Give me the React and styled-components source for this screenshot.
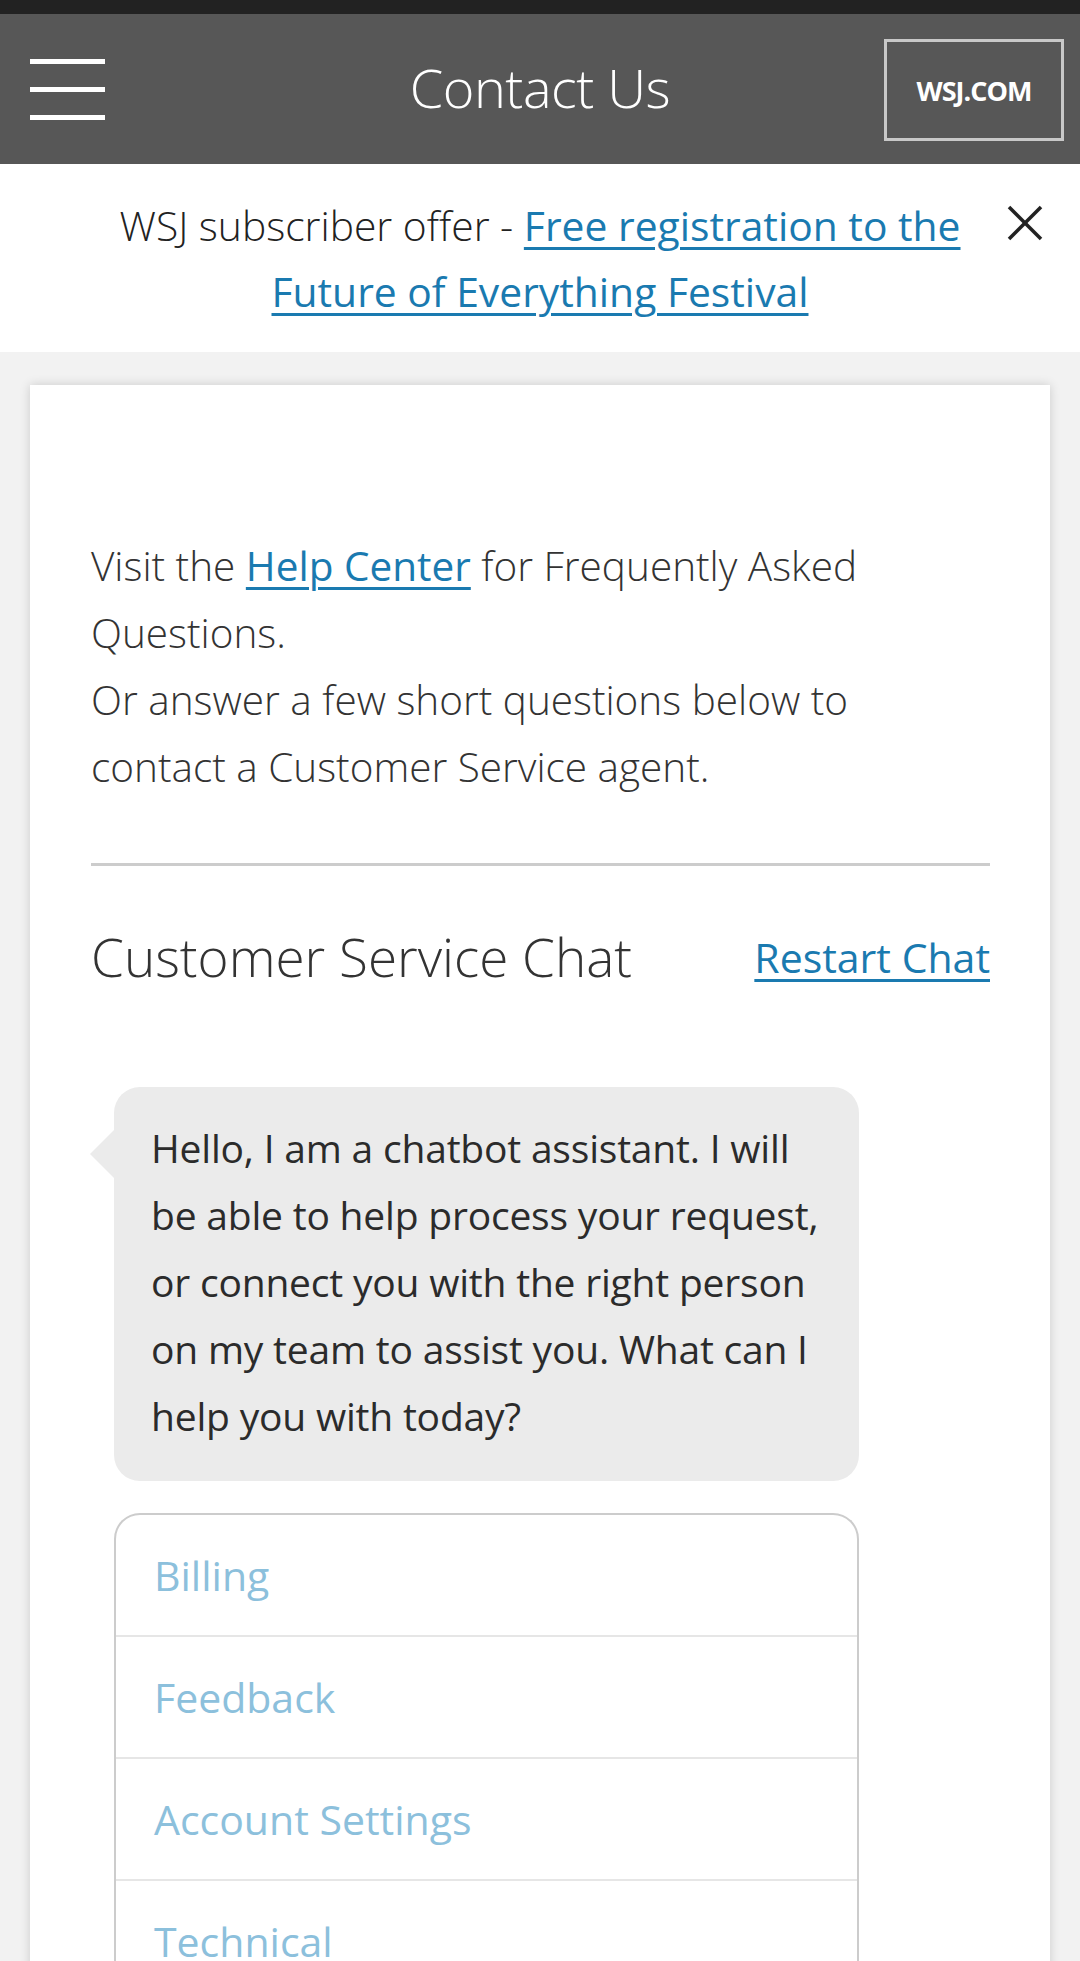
import styled, { createGlobalStyle } from "styled-components";

const GlobalStyle = createGlobalStyle`
    body {
        margin: 0;
        background: #f2f2f2;
        font-family: "Open Sans", "Noto Sans", sans-serif;
        color: #333333;
    }
`;

const options = ["Billing", "Feedback", "Account Settings", "Technical"];

export default function App(){
    return(
        <>
        <GlobalStyle />
        <StatusStrip />
        <Header>
            <Burger>
                <span></span>
                <span></span>
                <span></span>
            </Burger>
            <Title>Contact Us</Title>
            <SiteButton>WSJ.COM</SiteButton>
        </Header>

        <Banner>
            <BannerText>
                WSJ subscriber offer - <Link href="#">Free registration to the Future of Everything Festival</Link>
            </BannerText>
            <Close aria-label="close">
                <svg width="38" height="38" viewBox="0 0 38 38">
                    <line x1="3" y1="3" x2="35" y2="35" stroke="#222" strokeWidth="3.5" />
                    <line x1="35" y1="3" x2="3" y2="35" stroke="#222" strokeWidth="3.5" />
                </svg>
            </Close>
        </Banner>

        <Main>
            <Card>
                <Intro>
                    Visit the <Link href="#">Help Center</Link> for Frequently Asked Questions.
                    <br />
                    Or answer a few short questions below to contact a Customer Service agent.
                </Intro>
                <Divider />
                <ChatHead>
                    <h2>Customer Service Chat</h2>
                    <Link href="#" className="restart">Restart Chat</Link>
                </ChatHead>
                <Bubble>
                    Hello, I am a chatbot assistant. I will be able to help process your request, or connect you with the right person on my team to assist you. What can I help you with today?
                </Bubble>
                <Choices>
                    {options.map((o) => (
                        <li key={o}>{o}</li>
                    ))}
                </Choices>
            </Card>
        </Main>
        </>
    );
}

const StatusStrip = styled.div`
    height: 14px;
    background: #222222;
`

const Header = styled.header`
    height: 150px;
    background: #575757;
    display: grid;
    grid-template-columns: 1fr auto 1fr;
    align-items: center;
    padding: 0 16px;
`

const Burger = styled.div`
    display: flex;
    flex-direction: column;
    gap: 23px;
    width: 75px;
    margin-left: 14px;
    span {
        display: block;
        height: 5px;
        background: #ffffff;
    }
`

const Title = styled.h1`
    margin: 0 0 4px;
    font-weight: 300;
    font-size: 54px;
    color: #ffffff;
    letter-spacing: -0.5px;
`

const SiteButton = styled.button`
    justify-self: end;
    width: 180px;
    height: 102px;
    background: transparent;
    border: 3px solid #c8c8c8;
    color: #ffffff;
    font-family: "Open Sans", sans-serif;
    font-weight: 700;
    font-size: 27px;
    letter-spacing: -1px;
    margin-top: 2px;
`

const Banner = styled.div`
    background: #ffffff;
    display: flex;
    align-items: flex-start;
    gap: 26px;
    padding: 28px 36px 28px 100px;
`

const BannerText = styled.p`
    width: 880px;
    margin: 0;
    text-align: center;
    font-size: 40.8px;
    line-height: 66px;
    font-weight: 300;
    color: #222222;
`

const Link = styled.a`
    color: #1a7ab0;
    text-decoration: underline;
    text-decoration-thickness: 3px;
    text-underline-offset: 6px;
    font-weight: 400;
`

const Close = styled.button`
    margin-top: 12px;
    padding: 0;
    border: 0;
    background: none;
    width: 38px;
    height: 38px;
    svg { display: block; }
`

const Main = styled.main`
    padding: 33px 30px 0;
`

const Card = styled.section`
    background: #ffffff;
    box-shadow: 0 0 10px rgba(0, 0, 0, 0.16);
    padding: 147px 60px 0 61px;
    min-height: 1600px;
`

const Intro = styled.p`
    margin: 0;
    max-width: 860px;
    font-size: 40.5px;
    line-height: 67px;
    font-weight: 300;
    color: #333333;
`

const Divider = styled.hr`
    margin: 63px 0 0;
    border: 0;
    height: 3px;
    background: #cccccc;
`

const ChatHead = styled.div`
    display: flex;
    justify-content: space-between;
    align-items: center;
    margin-top: 61px;
    h2 {
        margin: 0;
        font-size: 53px;
        line-height: 60px;
        font-weight: 300;
        color: #333333;
    }
    .restart {
        font-size: 41px;
    }
`

const Bubble = styled.div`
    position: relative;
    margin: 100px 0 0 23px;
    width: 745px;
    box-sizing: border-box;
    background: #ebebeb;
    border-radius: 26px;
    padding: 27px 18px 32px 37px;
    font-size: 39px;
    letter-spacing: -0.2px;
    line-height: 67px;
    color: #2b2b2b;
    &::before {
        content: "";
        position: absolute;
        left: -24px;
        top: 43px;
        border-top: 24px solid transparent;
        border-bottom: 24px solid transparent;
        border-right: 24px solid #ebebeb;
    }
`

const Choices = styled.ul`
    list-style: none;
    margin: 32px 0 0 23px;
    padding: 0;
    width: 745px;
    box-sizing: border-box;
    border: 2px solid #cccccc;
    border-bottom: 0;
    border-radius: 26px 26px 0 0;
    li {
        height: 120px;
        display: flex;
        align-items: center;
        padding-left: 38px;
        font-size: 41px;
        color: #8cc0dc;
        border-bottom: 2px solid #e6e6e6;
    }
`
